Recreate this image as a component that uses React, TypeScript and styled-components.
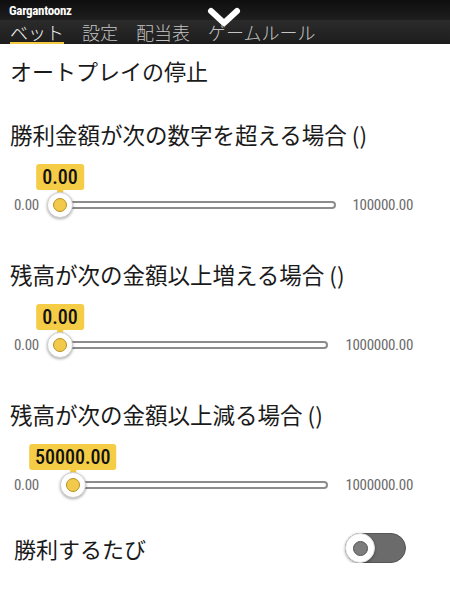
import React from "react";
import styled, { createGlobalStyle } from "styled-components";

const GlobalStyle = createGlobalStyle`
  html, body {
    margin: 0;
    padding: 0;
    background: #fff;
  }
  body {
    font-family: "Noto Sans CJK JP", "Noto Sans", sans-serif;
    color: #1a1a1a;
  }
`;

const NUM_FONT = `"Roboto Condensed", "Liberation Sans Narrow", "DejaVu Sans Condensed", Roboto, sans-serif`;

const Header = styled.header`
  position: relative;
  background: linear-gradient(#0e0e0e, #1e1e1e 45%, #2b2b2b 46%, #1d1d1d);
  height: 44px;
  overflow: hidden;
`;

const Brand = styled.div`
  height: 20px;
  padding-left: 9px;
  display: flex;
  align-items: center;
  color: #fff;
  font-family: ${NUM_FONT};
  font-stretch: condensed;
  font-weight: 700;
  font-size: 13px;
  letter-spacing: -0.3px;
`;

const Tabs = styled.nav`
  display: flex;
  gap: 18px;
  padding-left: 10px;
  height: 24px;
`;

const Tab = styled.div<{ $active?: boolean }>`
  font-size: 18px;
  font-weight: 300;
  line-height: 22px;
  padding-top: 1px;
  height: 21px;
  color: ${(p) => (p.$active ? "#f2f2f2" : "#c4c4c4")};
  border-bottom: 2px solid ${(p) => (p.$active ? "#f3c93f" : "transparent")};
`;

const Chevron = styled.svg`
  position: absolute;
  left: 206px;
  top: 4px;
`;

const Content = styled.main`
  display: flex;
  flex-direction: column;
  padding: 14px 0 0 10px;
`;

const Title = styled.h1`
  margin: 0 0 40px;
  font-size: 22px;
  font-weight: 400;
  line-height: 24px;
`;

const Section = styled.section`
  display: flex;
  flex-direction: column;
  margin-bottom: 44px;
`;

const Heading = styled.h2`
  margin: 0;
  padding-bottom: 4px;
  font-size: 22.5px;
  font-weight: 400;
  line-height: 24px;
  white-space: nowrap;
`;

const SliderRow = styled.div`
  display: flex;
  align-items: center;
  margin-top: 42px;
  height: 26px;
  padding: 0 37px 0 4px;
`;

const EndLabel = styled.span`
  font-family: ${NUM_FONT};
  font-stretch: condensed;
  font-size: 15px;
  color: #6b6b6b;
  letter-spacing: -0.3px;
`;

const TrackArea = styled.div`
  position: relative;
  flex: 1;
  height: 26px;
  margin: 0 17px 0 8px;
`;

const Rail = styled.div`
  position: absolute;
  right: 0;
  top: 9px;
  height: 8px;
  box-sizing: border-box;
  border: 2px solid #8c8c8c;
  border-radius: 0 5px 5px 0;
  background: #fff;
`;

const Thumb = styled.div`
  position: absolute;
  top: 0;
  width: 26px;
  height: 26px;
  margin-left: -13px;
  box-sizing: border-box;
  border-radius: 50%;
  background: #fff;
  border: 1px solid #d0d0d0;
  box-shadow: 0 1px 3px rgba(0, 0, 0, 0.35);
  display: flex;
  align-items: center;
  justify-content: center;

  &::after {
    content: "";
    width: 14px;
    height: 14px;
    box-sizing: border-box;
    border-radius: 50%;
    background: #f2c94a;
    border: 1px solid #b89220;
  }
`;

const Bubble = styled.div`
  position: absolute;
  bottom: 28px;
  transform: translateX(-50%);
  background: #f4cc45;
  border-radius: 3px;
  padding: 0 6px;
  height: 26px;
  display: flex;
  align-items: center;
  font-family: ${NUM_FONT};
  font-stretch: condensed;
  font-size: 20px;
  font-weight: 500;
  color: #111;
  white-space: nowrap;

  &::after {
    content: "";
    position: absolute;
    left: 50%;
    bottom: -4px;
    margin-left: -3px;
    width: 6px;
    height: 4px;
    background: #f4cc45;
  }
`;

const ToggleRow = styled.div`
  display: flex;
  align-items: center;
  justify-content: space-between;
  padding: 0 44px 0 4px;
  margin-top: -9px;
  height: 30px;
`;

const ToggleLabel = styled.span`
  font-size: 22px;
  line-height: 28px;
`;

const Switch = styled.div`
  position: relative;
  width: 61px;
  height: 30px;
  box-sizing: border-box;
  border-radius: 15px;
  background: #6b6b6b;
  border: 1px solid #555;
`;

const SwitchKnob = styled.div`
  position: absolute;
  left: -1px;
  top: -1px;
  width: 30px;
  height: 30px;
  box-sizing: border-box;
  border-radius: 50%;
  background: #fff;
  border: 1px solid #ddd;
  box-shadow: 0 1px 3px rgba(0, 0, 0, 0.35);
  display: flex;
  align-items: center;
  justify-content: center;

  &::after {
    content: "";
    width: 15px;
    height: 15px;
    box-sizing: border-box;
    border-radius: 50%;
    background: #7d7d7d;
    border: 1px solid #555;
  }
`;

type SliderProps = {
  label: string;
  value: number;
  max: number;
};

function fmt(n: number) {
  return n.toFixed(2);
}

function Slider({ label, value, max }: SliderProps) {
  const pct = value / max;
  // thumb center sits 13px in at 0, travels the rest of the track
  const left = `calc(13px + (100% - 26px) * ${pct})`;
  return (
    <Section>
      <Heading>{label}</Heading>
      <SliderRow>
        <EndLabel>{fmt(0)}</EndLabel>
        <TrackArea>
          <Rail style={{ left }} />
          <Bubble style={{ left }}>{fmt(value)}</Bubble>
          <Thumb style={{ left }} />
        </TrackArea>
        <EndLabel>{fmt(max)}</EndLabel>
      </SliderRow>
    </Section>
  );
}

const tabs = ["ベット", "設定", "配当表", "ゲームルール"];

export default function App() {
  return (
    <>
      <GlobalStyle />
      <Header>
        <Brand>Gargantoonz</Brand>
        <Tabs>
          {tabs.map((t, i) => (
            <Tab key={t} $active={i === 0}>
              {t}
            </Tab>
          ))}
        </Tabs>
        <Chevron width="36" height="28" viewBox="0 0 36 28">
          <path
            d="M5 7 L18 19 L31 7"
            fill="none"
            stroke="#fff"
            strokeWidth="6"
            strokeLinecap="round"
            strokeLinejoin="round"
          />
        </Chevron>
      </Header>
      <Content>
        <Title>オートプレイの停止</Title>
        <Slider label="勝利金額が次の数字を超える場合 ()" value={0} max={100000} />
        <Slider label="残高が次の金額以上増える場合 ()" value={0} max={1000000} />
        <Slider label="残高が次の金額以上減る場合 ()" value={50000} max={1000000} />
        <ToggleRow>
          <ToggleLabel>勝利するたび</ToggleLabel>
          <Switch>
            <SwitchKnob />
          </Switch>
        </ToggleRow>
      </Content>
    </>
  );
}
